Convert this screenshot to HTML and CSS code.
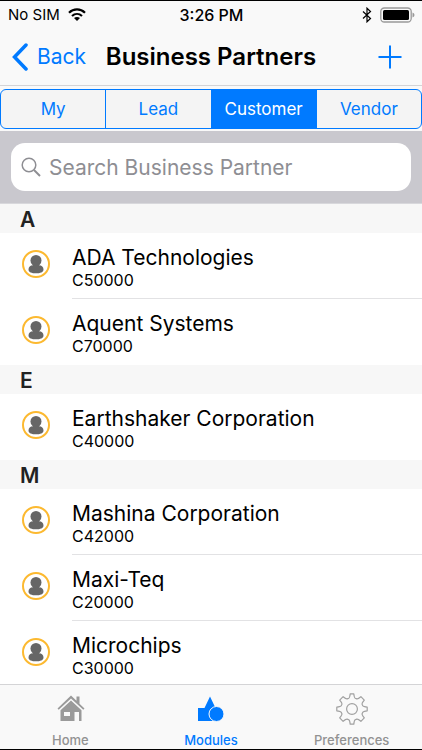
FILE: index.html
```html
<!DOCTYPE html>
<html lang="en">
<head>
<meta charset="utf-8">
<meta name="viewport" content="width=device-width, initial-scale=1">
<title>Business Partners</title>
<link rel="stylesheet" href="styles.css">
</head>
<body>
<svg class="defs" aria-hidden="true">
  <symbol id="person" viewBox="0 0 28 28">
    <circle cx="14" cy="14" r="13" fill="#fff" stroke="#fcb930" stroke-width="2"/>
    <circle cx="14" cy="10.500" r="5.500" fill="#666"/>
    <path fill="#666" d="M11 14h6v1.200c2.800 0 4.500 1.800 4.500 4.200 0 2.600-3.300 3.900-7.500 3.900s-7.500-1.300-7.500-3.900c0-2.400 1.700-4.200 4.500-4.200z"/>
  </symbol>
</svg>
<div class="app">
  <header class="top">
    <div class="status">
      <div class="carrier">
        <span>No SIM</span>
        <svg width="18" height="13" viewBox="0 0 18 13" aria-hidden="true">
          <path fill="none" stroke="#000" stroke-width="2.200" d="M1 4.800C5.500.300 12.500.300 17 4.800M4 8c2.900-2.700 7.100-2.700 10 0"/>
          <path d="M9 13l-3-3c1.700-1.500 4.300-1.500 6 0z"/>
        </svg>
      </div>
      <time>3:26 PM</time>
      <div class="power">
        <svg width="10" height="16" viewBox="0 0 10 16" aria-hidden="true"><path fill="none" stroke="#000" stroke-width="1.200" d="M1 4.500l7.500 7L5 14.800V1.200l3.500 3.300-7.500 7"/></svg>
        <svg width="35" height="16" viewBox="0 0 35 16" aria-hidden="true">
          <rect x=".8" y="1" width="30.400" height="14" rx="3.500" fill="none" stroke="#999" stroke-width="1.300"/>
          <rect x="3" y="3" width="26" height="10" rx="1.500"/>
          <path fill="#999" d="M32.500 5.500q2 .8 2 2.500t-2 2.500z"/>
        </svg>
      </div>
    </div>
    <nav class="bar">
      <a class="back" href="#"><svg width="17" height="28" viewBox="0 0 17 28" aria-hidden="true"><path fill="none" stroke="#007aff" stroke-width="3.500" stroke-linecap="round" stroke-linejoin="miter" d="M14 2L2.500 14 14 26"/></svg><span>Back</span></a>
      <h1>Business Partners</h1>
      <button class="add" type="button" aria-label="Add"><svg width="24" height="24" viewBox="0 0 24 24" aria-hidden="true"><path stroke="#007aff" stroke-width="2" d="M12 .5v23M.5 12h23"/></svg></button>
    </nav>
  </header>
  <div class="filter">
    <div class="segments">
      <button type="button">My</button>
      <button type="button">Lead</button>
      <button type="button" class="on" aria-pressed="true">Customer</button>
      <button type="button">Vendor</button>
    </div>
  </div>
  <form class="search">
    <label class="field">
      <svg width="20" height="20" viewBox="0 0 20 20" aria-hidden="true"><g fill="none" stroke="#8e8e93" stroke-width="1.500"><circle cx="8" cy="8" r="6.800"/><path stroke-width="2" d="M13 13l6 6"/></g></svg>
      <input type="search" placeholder="Search Business Partner" aria-label="Search Business Partner">
    </label>
  </form>
  <main class="list">
    <section>
      <h2>A</h2>
      <ul>
        <li><svg class="avatar" aria-hidden="true"><use href="#person"/></svg><div class="text"><span class="name">ADA Technologies</span><span class="code">C50000</span></div></li>
        <li><svg class="avatar" aria-hidden="true"><use href="#person"/></svg><div class="text"><span class="name">Aquent Systems</span><span class="code">C70000</span></div></li>
      </ul>
    </section>
    <section>
      <h2>E</h2>
      <ul>
        <li><svg class="avatar" aria-hidden="true"><use href="#person"/></svg><div class="text"><span class="name">Earthshaker Corporation</span><span class="code">C40000</span></div></li>
      </ul>
    </section>
    <section>
      <h2>M</h2>
      <ul>
        <li><svg class="avatar" aria-hidden="true"><use href="#person"/></svg><div class="text"><span class="name">Mashina Corporation</span><span class="code">C42000</span></div></li>
        <li><svg class="avatar" aria-hidden="true"><use href="#person"/></svg><div class="text"><span class="name">Maxi-Teq</span><span class="code">C20000</span></div></li>
        <li><svg class="avatar" aria-hidden="true"><use href="#person"/></svg><div class="text"><span class="name">Microchips</span><span class="code">C30000</span></div></li>
      </ul>
    </section>
  </main>
  <nav class="tabs">
    <a href="#"><svg width="32" height="32" viewBox="0 0 32 32" aria-hidden="true"><path fill="#9a9a9a" d="M17 2.500l5.500 5.200V3.500h3v7.200l5 4.800-1.200 1.300L17 5.500 4.700 16.800l-1.200-1.300z"/><path fill="#9a9a9a" fill-rule="evenodd" d="M17 7.500l10.500 9.800V28H25V19h-4.500v9H6.500V17.300zM10 19v4h6v-4z"/></svg><span>Home</span></a>
    <a href="#" class="on" aria-current="page"><svg width="32" height="32" viewBox="0 0 32 32" aria-hidden="true"><path fill="#007aff" d="M3 15h6.500L15 3.500 20.500 15v13H3z"/><circle cx="21.500" cy="21" r="7.500" fill="#007aff" stroke="#f9f9f9"/></svg><span>Modules</span></a>
    <a href="#"><svg width="32" height="32" viewBox="0 0 32 32" aria-hidden="true"><g fill="none" stroke="#a0a0a0" stroke-width="1.200"><circle cx="16" cy="16" r="5.400"/><path stroke-linejoin="round" d="M14.200.8h3.600q.4 3.900 1.400 4.400l1.600.7q1 .4 4.100-2.200l3.400 3.400q-2.600 3.100-2.200 4.100l.7 1.600q.5 1 4.400 1.400v3.600q-3.900.4-4.400 1.400l-.7 1.600q-.4 1 2.200 4.100l-3.400 3.400q-3.100-2.600-4.100-2.200l-1.600.7q-1 .5-1.400 4.400h-3.600q-.4-3.900-1.400-4.400l-1.600-.7q-1-.4-4.100 2.200l-3.400-3.400q2.600-3.100 2.200-4.100l-.7-1.600q-.5-1-4.400-1.400v-3.600q3.900-.4 4.400-1.400l.7-1.600q.4-1-2.200-4.100l3.400-3.400q3.100 2.600 4.100 2.200l1.600-.7q1-.5 1.400-4.400z"/></g></svg><span>Preferences</span></a>
  </nav>
</div>
</body>
</html>
```
FILE: styles.css
```css
* { box-sizing: border-box; }
body {
  margin: 0;
  background: #fff;
  color: #000;
  font-family: Inter, "Liberation Sans", sans-serif;
}
h1, h2, ul { margin: 0; padding: 0; }
ul { list-style: none; }
a { color: inherit; text-decoration: none; }
button { border: 0; padding: 0; background: none; font: inherit; color: inherit; }
svg { display: block; flex: none; }
.defs { position: absolute; width: 0; height: 0; }

.app {
  display: flex;
  flex-direction: column;
  height: 100vh;
  border-top: 1px solid #000;
  border-bottom: 1px solid #000;
}
.top { background: #f9f9f9; border-bottom: 1px solid #d4d4d6; }

.status {
  display: grid;
  grid-template-columns: 1fr auto 1fr;
  align-items: center;
  height: 27px;
  padding: 0 7px 0 8px;
  font-size: 15px;
}
.carrier, .power { display: flex; align-items: center; gap: 8px; }
.power { justify-content: flex-end; }
.status time { font-size: 16px; font-weight: 500; }

.bar {
  display: grid;
  grid-template-columns: 1fr auto 1fr;
  align-items: center;
  height: 57px;
  padding: 0 12px;
}
.back { display: flex; align-items: center; gap: 8px; color: #007aff; font-size: 21px; }
.bar h1 { font-size: 24px; font-weight: 600; white-space: nowrap; }
.add { justify-self: end; margin-right: 8px; }

.filter { padding: 3px 0 2px; background: #f9f9f9; }
.segments {
  display: flex;
  height: 40px;
  border: 1px solid #007aff;
  border-radius: 6px;
  overflow: hidden;
  background: #f4f4f4;
  color: #007aff;
  font-size: 17px;
}
.segments button { flex: 1; }
.segments button + button { border-left: 1px solid #007aff; }
.segments .on { background: #007aff; color: #fff; }

.search {
  padding: 12px 11px;
  background: #c9c8ce;
  border-bottom: 1px solid #d8d8dc;
}
.field {
  display: flex;
  align-items: center;
  gap: 8px;
  height: 48px;
  padding: 0 10px;
  border-radius: 14px;
  background: #fff;
}
.field input {
  flex: 1;
  min-width: 0;
  padding: 0;
  border: 0;
  outline: 0;
  background: none;
  font: inherit;
  font-size: 21px;
}
.field input::placeholder { color: #8e8e93; opacity: 1; }

.list { flex: 1; min-height: 0; overflow: hidden; }
.list h2 {
  height: 29px;
  padding-left: 20px;
  background: #f7f7f7;
  color: #222;
  font-size: 21px;
  font-weight: 600;
  line-height: 32px;
}
.list li { display: flex; height: 66px; padding-left: 22px; }
.avatar { width: 28px; height: 28px; margin: 17px 22px 0 0; }
.text {
  display: flex;
  flex: 1;
  flex-direction: column;
  padding-top: 11px;
  border-bottom: 1px solid #e2e2e4;
}
.list li:last-child .text { border-bottom: 0; }
.name { font-size: 21px; line-height: 28px; }
.code { font-size: 16px; line-height: 16px; }

.tabs {
  display: grid;
  grid-template-columns: repeat(3, 1fr);
  height: 65px;
  border-top: 1px solid #d4d4d6;
  background: #f9f9f9;
  color: #929292;
  font-size: 13px;
  font-weight: 500;
}
.tabs a { display: flex; flex-direction: column; align-items: center; gap: 7px; padding-top: 8px; }
.tabs .on { color: #007aff; }
```
